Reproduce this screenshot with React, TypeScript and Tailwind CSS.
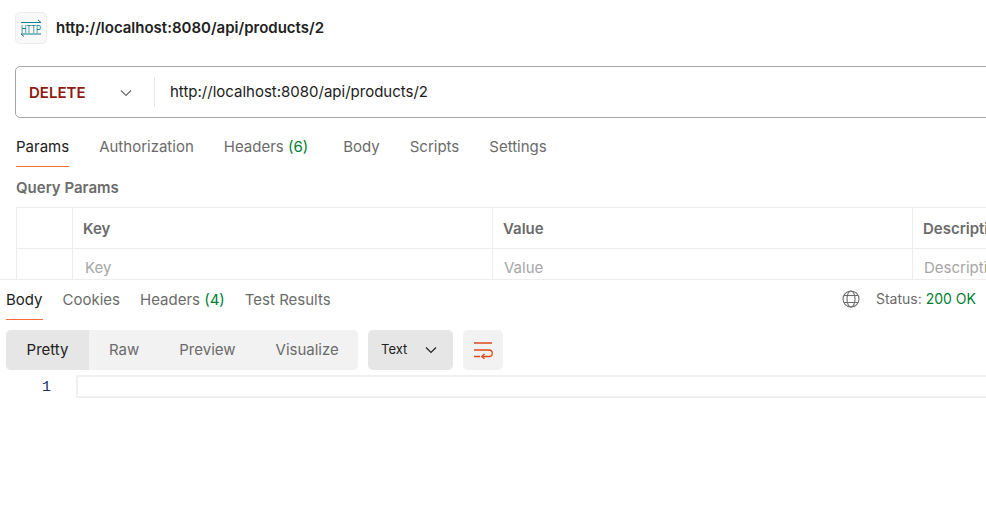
import React from "react";

function Tab({ label, count, active, className }: { label: string; count?: string; active?: boolean; className?: string }) {
  return (
    <div className={`relative flex h-full items-start pt-px ${className ?? ""}`}>
      <span className={active ? "text-[#212121]" : "text-[#6b6b6b]"}>
        {label}
        {count ? <span className="text-[#007f31]"> ({count})</span> : null}
      </span>
      {active ? <div className="absolute bottom-0 left-0 right-0 h-px bg-[#ff6c37]" /> : null}
    </div>
  );
}

function HttpIcon() {
  return (
    <div className="flex h-[32px] w-[32px] items-center justify-center rounded-[5px] border border-[#ededed] bg-[#f9f9f9]">
      <svg width="22" height="22" viewBox="0 0 22 22" fill="none">
        <path d="M1 5.5H21M18 3l3 2.5" stroke="#0f7f8c" strokeWidth="1" />
        <path d="M1 17H21M1 17l3 2.5" stroke="#0f7f8c" strokeWidth="1" />
        <text x="1" y="15.5" textLength="20" lengthAdjust="spacingAndGlyphs" fontSize="10" fontFamily="Liberation Sans, sans-serif" fill="#0f7f8c">
          HTTP
        </text>
      </svg>
    </div>
  );
}

function Chevron({ color }: { color: string }) {
  return (
    <svg width="12" height="8" viewBox="0 0 12 8" fill="none">
      <path d="M1 1.5l5 5 5-5" stroke={color} strokeWidth="1.2" />
    </svg>
  );
}

function GlobeIcon() {
  return (
    <svg width="18" height="18" viewBox="0 0 18 18" fill="none" stroke="#6b6b6b" strokeWidth="1.1">
      <circle cx="9" cy="9" r="8" />
      <ellipse cx="9" cy="9" rx="4" ry="8" />
      <path d="M2 5.5h14M2 12.5h14" />
    </svg>
  );
}

function WrapIcon() {
  return (
    <svg width="20" height="18" viewBox="0 0 20 18" fill="none" stroke="#e0491f" strokeWidth="1.3">
      <path d="M1 2h18M1 9h15a3 3 0 0 1 0 6.5H9" />
      <path d="M1 15.5h6M11.5 12.8L8.8 15.5l2.7 2.5" />
    </svg>
  );
}

export default function App() {
  return (
    <div className="h-[526px] w-[986px] overflow-hidden bg-white font-['Inter',sans-serif] text-[15px] leading-[20px]">
      {/* request pane */}
      <div className="h-[279px] overflow-hidden">
        <div className="flex h-[66px] items-center gap-[9px] pb-[11px] pl-[15px]">
          <HttpIcon />
          <span className="font-semibold text-[#212121]">http://localhost:8080/api/products/2</span>
        </div>

        <div className="ml-[15px] flex h-[52px] w-[1100px] items-center rounded-[5px] border border-[#a6a6a6]">
          <div className="flex h-[30px] w-[139px] items-center justify-between border-r border-[#e6e6e6] pl-[13px] pr-[22px] pt-px">
            <span className="font-semibold text-[#8e1a10]">DELETE</span>
            <Chevron color="#6b6b6b" />
          </div>
          <span className="pl-[15px] text-[#212121]">http://localhost:8080/api/products/2</span>
        </div>

        <div className="ml-[16px] mt-[18px] flex h-[31px]">
          <Tab label="Params" active className="mr-[30px]" />
          <Tab label="Authorization" className="mr-[30px]" />
          <Tab label="Headers" count="6" className="mr-[35px]" />
          <Tab label="Body" className="mr-[30px]" />
          <Tab label="Scripts" className="mr-[30px]" />
          <Tab label="Settings" />
        </div>

        <div className="ml-[16px] mt-[11px] h-[29px] font-semibold text-[#6b6b6b]">Query Params</div>

        <div className="ml-[16px] w-[1100px] border-l border-t border-[#ededed]">
          <div className="grid h-[41px] grid-cols-[56px_420px_420px_1fr] border-b border-[#ededed] font-semibold text-[#6b6b6b]">
            <div className="border-r border-[#ededed]" />
            <div className="flex items-center border-r border-[#ededed] pl-[10px] pt-px">Key</div>
            <div className="flex items-center border-r border-[#ededed] pl-[10px] pt-px">Value</div>
            <div className="flex items-center pl-[10px] pt-px">Description</div>
          </div>
          <div className="grid h-[40px] grid-cols-[56px_420px_420px_1fr] text-[#a6a6a6]">
            <div className="border-r border-[#ededed]" />
            <div className="border-r border-[#ededed] pl-[12px] pt-[9px]">Key</div>
            <div className="border-r border-[#ededed] pl-[11px] pt-[9px]">Value</div>
            <div className="pl-[11px] pt-[9px]">Description</div>
          </div>
        </div>
      </div>

      {/* response pane */}
      <div className="border-t border-[#ededed]">
        <div className="flex h-[40px] items-start pt-[9px]">
          <div className="ml-[6px] flex h-[31px]">
            <Tab label="Body" active className="mr-[20px]" />
            <Tab label="Cookies" className="mr-[20px]" />
            <Tab label="Headers" count="4" className="mr-[20px]" />
            <Tab label="Test Results" />
          </div>
          <div className="ml-auto mr-[10px] flex items-center text-[14px]">
            <GlobeIcon />
            <span className="ml-[16px] text-[#6b6b6b]">Status:</span>
            <span className="ml-[4px] text-[#007f31]">200 OK</span>
          </div>
        </div>

        <div className="ml-[6px] mt-[10px] flex h-[40px] items-center">
          <div className="flex h-full w-[352px] items-center rounded-[5px] bg-[#f2f2f2] text-[#6b6b6b]">
            <div className="flex h-full w-[83px] items-center justify-center rounded-l-[5px] bg-[#e6e6e6] text-[#212121]">Pretty</div>
            <span className="ml-[20px]">Raw</span>
            <span className="ml-[40px]">Preview</span>
            <span className="ml-[40px]">Visualize</span>
          </div>
          <div className="ml-[10px] flex h-full w-[85px] items-center justify-between rounded-[5px] bg-[#e6e6e6] pl-[13px] pr-[16px] text-[#212121]">
            <span className="pb-[2px] text-[13px]">Text</span>
            <Chevron color="#212121" />
          </div>
          <div className="ml-[10px] flex h-full w-[40px] items-center justify-center rounded-[5px] bg-[#f2f2f2]">
            <WrapIcon />
          </div>
        </div>

        <div className="mt-[5px] flex h-[23px]">
          <div className="w-[51px] pt-px text-right font-['Liberation_Mono',monospace] text-[15px] leading-[23px] text-[#1a2f6e]">1</div>
          <div className="ml-[25px] h-[23px] flex-1 border-2 border-r-0 border-[#f0f0f0]" />
        </div>
      </div>
    </div>
  );
}
